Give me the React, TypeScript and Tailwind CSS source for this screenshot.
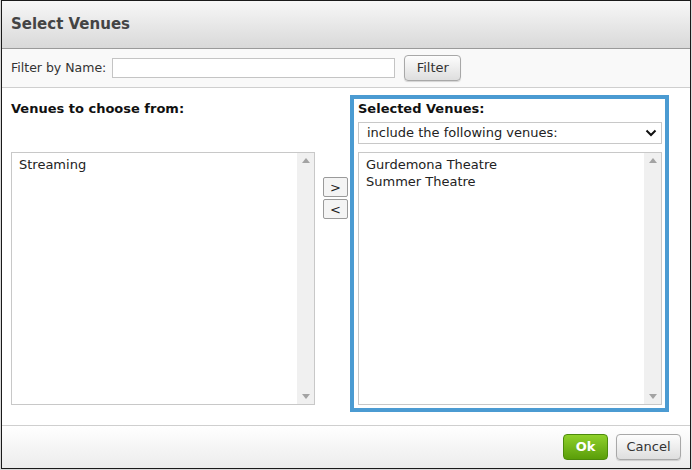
import React from "react"

const font = { fontFamily: '"DejaVu Sans", Verdana, sans-serif' }

// Fake listbox with a grey scroll track on the right
function ListBox({ items }: { items: string[] }) {
  return (
    <div className="flex h-[253px] border border-[#c8c8c8] bg-white">
      <div className="flex-1 px-[7px] pt-[3px] text-[13px] leading-[17px] text-[#222]">
        {items.map((it) => (
          <div key={it}>{it}</div>
        ))}
      </div>
      <div className="flex w-[17px] flex-col justify-between bg-[#f0f0f0] py-[5px] items-center">
        <svg width="8" height="5" viewBox="0 0 8 5"><path d="M0 5 L4 0 L8 5 Z" fill="#a3a3a3" /></svg>
        <svg width="8" height="5" viewBox="0 0 8 5"><path d="M0 0 L4 5 L8 0 Z" fill="#a3a3a3" /></svg>
      </div>
    </div>
  )
}

export default function App() {
  return (
    <div className="h-[470px] w-[692px] bg-[#d8d8d8] pl-px" style={font}>
      <div className="flex h-[469px] w-[690px] flex-col border border-[#1a1a1a] bg-white">
        {/* HEADER */}
        <div className="flex h-[48px] items-center border-b border-[#9a9a9a] bg-gradient-to-b from-[#f7f7f7] to-[#d9d9d9] pl-[9px]">
          <h1 className="text-[15px] font-bold text-[#444]">Select Venues</h1>
        </div>

        {/* FILTER */}
        <div className="flex h-[39px] items-center gap-[6px] border-b border-[#cfcfcf] bg-[#f9f9f9] pl-[9px]">
          <span className="text-[12.5px] text-[#333]">Filter by Name:</span>
          <input className="h-[20px] w-[283px] border border-[#c4c4c4] bg-white" />
          <button className="ml-[3px] h-[26px] w-[57px] rounded-[4px] border border-[#a8a8a8] bg-gradient-to-b from-[#fdfdfd] to-[#dedede] text-[13px] text-[#333] shadow-[0_1px_1px_rgba(0,0,0,0.15)]">
            Filter
          </button>
        </div>

        {/* BODY */}
        <div className="flex flex-1 pl-[9px] pt-[7px]">
          <div className="flex w-[304px] flex-col pt-[6px]">
            <p className="text-[13px] font-bold leading-[16px] text-[#111]">Venues to choose from:</p>
            <div className="mt-[35px]">
              <ListBox items={["Streaming"]} />
            </div>
          </div>

          <div className="flex w-[35px] flex-col items-start gap-[2px] pt-[82px] pl-[8px]">
            <button className="h-[20px] w-[25px] rounded-[2px] border border-[#9a9a9a] bg-[#f4f4f4] text-[13px] leading-none text-[#222]">&gt;</button>
            <button className="h-[20px] w-[25px] rounded-[2px] border border-[#9a9a9a] bg-[#f4f4f4] text-[13px] leading-none text-[#222]">&lt;</button>
          </div>

          <div className="flex h-[317px] w-[319px] flex-col border-4 border-[#4b9bd2] pl-[4px] pr-[3px] pt-[2px]">
            <p className="text-[13px] font-bold leading-[16px] text-[#111]">Selected Venues:</p>
            <div className="mt-[5px] flex h-[22px] items-center justify-between border border-[#c8c8c8] bg-white pl-[8px] pr-[4px] text-[13px] text-[#222]">
              <span>include the following venues:</span>
              <svg width="12" height="8" viewBox="0 0 12 8"><path d="M1.5 1.5 L6 6 L10.5 1.5" fill="none" stroke="#111" strokeWidth="2" /></svg>
            </div>
            <div className="mt-[8px]">
              <ListBox items={["Gurdemona Theatre", "Summer Theatre"]} />
            </div>
          </div>
        </div>

        {/* FOOTER */}
        <div className="flex h-[43px] items-center justify-end gap-[8px] border-t border-[#cfcfcf] bg-gradient-to-b from-[#ffffff] to-[#ececec] pr-[9px]">
          <button className="h-[26px] w-[45px] rounded-[4px] border border-[#4c8a0c] bg-gradient-to-b from-[#8fd12a] to-[#5a9e08] text-[13px] font-bold text-white">
            Ok
          </button>
          <button className="h-[26px] w-[65px] rounded-[4px] border border-[#a8a8a8] bg-gradient-to-b from-[#fdfdfd] to-[#dedede] text-[13px] text-[#333] shadow-[0_1px_1px_rgba(0,0,0,0.15)]">
            Cancel
          </button>
        </div>
      </div>
    </div>
  )
}
